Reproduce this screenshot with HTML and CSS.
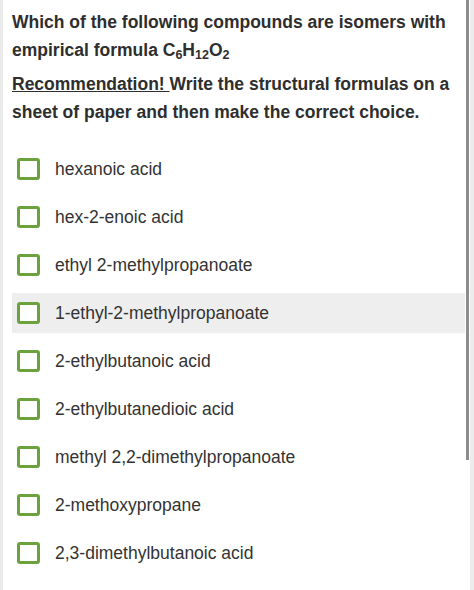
FILE: index.html
```html
<!DOCTYPE html>
<html>
<head>
    <title>Isomers question</title>
    <link rel="stylesheet" href="styles.css">
</head>
<body>
    <div class="frame">
        <div class="panel">
            <p class="question">Which of the following compounds are isomers with empirical formula C<sub>6</sub>H<sub>12</sub>O<sub>2</sub></p>
            <p class="question"><span class="note">Recommendation! </span>Write the structural formulas on a sheet of paper and then make the correct choice.</p>

            <ul class="choices">
                <li class="choice"><span class="box"></span>hexanoic acid</li>
                <li class="choice"><span class="box"></span>hex-2-enoic acid</li>
                <li class="choice"><span class="box"></span>ethyl 2-methylpropanoate</li>
                <li class="choice hover"><span class="box"></span>1-ethyl-2-methylpropanoate</li>
                <li class="choice"><span class="box"></span>2-ethylbutanoic acid</li>
                <li class="choice"><span class="box"></span>2-ethylbutanedioic acid</li>
                <li class="choice"><span class="box"></span>methyl 2,2-dimethylpropanoate</li>
                <li class="choice"><span class="box"></span>2-methoxypropane</li>
                <li class="choice"><span class="box"></span>2,3-dimethylbutanoic acid</li>
            </ul>
        </div>
        <div class="rail">
            <div class="track"><div class="thumb"></div></div>
            <div class="edge"></div>
        </div>
    </div>
</body>
</html>
```

FILE: styles.css
```css
body {
    margin: 0;
    background-color: #ffffff;
    font-family: "Liberation Sans", Arial, sans-serif;
    color: #333333;
}

.frame {
    display: flex;
    height: 590px;
}

.panel {
    flex: 1;
    border-left: 3px solid #ebebeb;
    padding: 8px 1px 0 9px;
}

.question {
    margin: 0 0 6px 0;
    font-size: 17.5px;
    font-weight: bold;
    line-height: 28px;
    color: #2e2e2e;
}

.question sub {
    font-size: 12.5px;
    line-height: 0;
    vertical-align: -3px;
}

.note {
    text-decoration: underline;
}

.choices {
    list-style: none;
    margin: 23px 0 0 0;
    padding: 0;
    display: flex;
    flex-direction: column;
    gap: 8px;
}

.choice {
    display: flex;
    align-items: center;
    height: 40px;
    padding-left: 5px;
    font-size: 17.5px;
    color: #333333;
}

.choice.hover {
    background-color: #eeeeee;
}

.box {
    width: 17px;
    height: 16px;
    border: 3px solid #6ca23c;
    border-radius: 3px;
    background-color: #ffffff;
    margin-right: 15px;
    flex-shrink: 0;
}

.rail {
    display: flex;
    width: 8px;
}

.track {
    width: 4px;
}

.thumb {
    width: 3px;
    height: 460px;
    background-color: #8c8c8c;
}

.edge {
    width: 4px;
    background-color: #ececec;
}
```
